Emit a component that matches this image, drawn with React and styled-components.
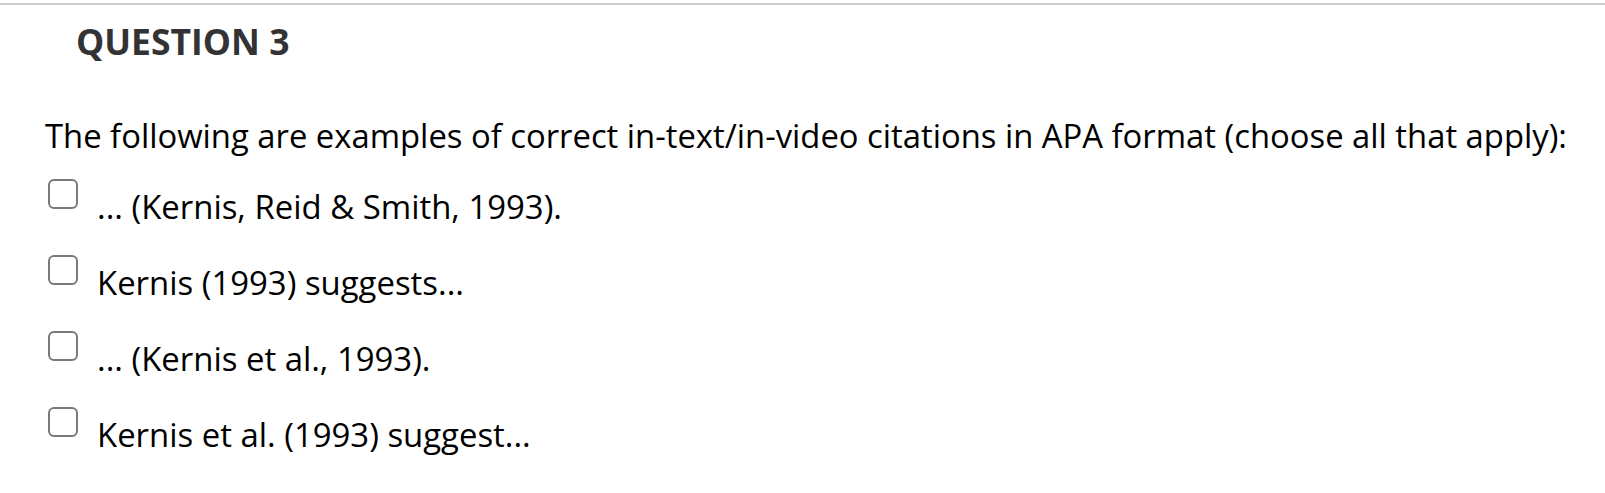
import React from "react";
import styled, { createGlobalStyle } from "styled-components";

const Global = createGlobalStyle`
  html, body { margin: 0; padding: 0; background: #fff; }
  body { font-family: "Open Sans", "Liberation Sans", sans-serif; }
`;

const Page = styled.div`
  width: 1605px;
  height: 493px;
  overflow: hidden;
  padding-top: 3px;
  box-sizing: border-box;
`;

const Rule = styled.div`
  height: 2px;
  background: #cccccc;
`;

const Heading = styled.h2`
  margin: 12px 0 0 0;
  padding-left: 76px;
  font-size: 35.5px;
  font-weight: 700;
  line-height: 49px;
  color: #333333;
`;

const Prompt = styled.p`
  margin: 48px 0 0 0;
  padding-left: 45px;
  font-size: 32.8px;
  line-height: 44px;
  color: #000;
`;

const Options = styled.div`
  display: flex;
  flex-direction: column;
  gap: 26px;
  margin-top: 21px;
  padding-left: 48px;
`;

const Option = styled.label`
  display: flex;
  align-items: flex-start;
  gap: 19px;
  cursor: pointer;
`;

const Box = styled.span`
  width: 30px;
  height: 30px;
  box-sizing: border-box;
  border: 2.5px solid #7a7a7a;
  border-radius: 6px;
  flex: none;
  background: #fff;
`;

const Text = styled.span`
  margin-top: 6px;
  font-size: 32.9px;
  line-height: 44px;
  color: #000;
`;

const options = [
  "... (Kernis, Reid & Smith, 1993).",
  "Kernis (1993) suggests...",
  "... (Kernis et al., 1993).",
  "Kernis et al. (1993) suggest...",
];

export default function App() {
  return (
    <Page>
      <Global />
      <Rule />
      <Heading>QUESTION 3</Heading>
      <Prompt>
        The following are examples of correct in-text/in-video citations in APA format (choose all that apply):
      </Prompt>
      <Options>
        {options.map((o) => (
          <Option key={o}>
            <Box />
            <Text>{o}</Text>
          </Option>
        ))}
      </Options>
    </Page>
  );
}
